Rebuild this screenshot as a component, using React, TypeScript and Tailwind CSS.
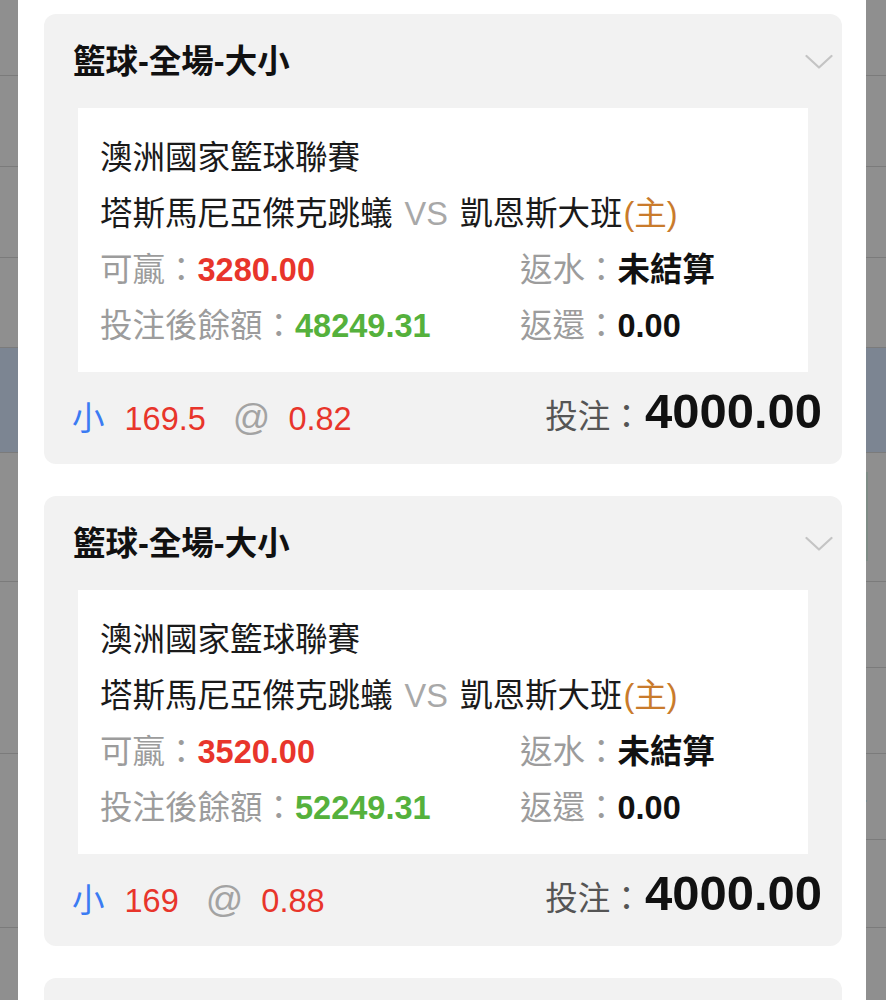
import React from "react";

type Bet = {
  win: string;
  balance: string;
  line: string;
  odds: string;
};

const bets: Bet[] = [
  { win: "3280.00", balance: "48249.31", line: "169.5", odds: "0.82" },
  { win: "3520.00", balance: "52249.31", line: "169", odds: "0.88" },
  { win: "3520.00", balance: "52249.31", line: "169", odds: "0.88" },
];

const Chevron = () => (
  <svg width="28" height="16" viewBox="0 0 28 16" fill="none">
    <polyline
      points="1.5,2 14,13.5 26.5,2"
      stroke="#c4c4c4"
      strokeWidth="2.2"
      strokeLinecap="round"
      strokeLinejoin="round"
    />
  </svg>
);

const BetCard: React.FC<{ bet: Bet }> = ({ bet }) => {
  return (
    <div className="shrink-0 rounded-[12px] bg-[#f2f2f2]">
      {/* Title */}
      <div className="mt-[26px] flex h-[44px] items-center justify-between pl-[29px] pr-[9px]">
        <span className="text-[32.5px] font-bold leading-[44px] text-[#111]">
          籃球-全場-大小
        </span>
        <Chevron />
      </div>

      {/* Detail box */}
      <div className="mx-[34px] mt-[24px] bg-white pb-[18px] pl-[22px] pt-[22px] text-[32.5px] leading-[56px]">
        <p className="text-[#1a1a1a]">澳洲國家籃球聯賽</p>
        <p className="text-[#1a1a1a]">
          塔斯馬尼亞傑克跳蟻<span className="ml-[12px] mr-[12px] text-[#a8a8a8]">VS</span>凱恩斯大班
          <span className="ml-[1px] text-[#c97b2c]">(主)</span>
        </p>
        <div className="flex">
          <p className="w-[420px] text-[#9c9c9c]">
            可贏：<span className="font-bold text-[#e8352b]">{bet.win}</span>
          </p>
          <p className="text-[#9c9c9c]">
            返水：<span className="font-bold text-[#111]">未結算</span>
          </p>
        </div>
        <div className="flex">
          <p className="w-[420px] text-[#9c9c9c]">
            投注後餘額：<span className="font-bold text-[#55b13c]">{bet.balance}</span>
          </p>
          <p className="text-[#9c9c9c]">
            返還：<span className="font-bold text-[#111]">0.00</span>
          </p>
        </div>
      </div>

      {/* Footer */}
      <div className="flex h-[92px] items-center justify-between pl-[28px] pr-[20px]">
        <div className="flex items-baseline text-[32.5px]">
          <span className="text-[#3b7bf3]">小</span>
          <span className="ml-[20px] text-[#e8352b]">{bet.line}</span>
          <span className="ml-[27px] text-[37px] text-[#a3a3a3]">@</span>
          <span className="ml-[18px] text-[#e8352b]">{bet.odds}</span>
        </div>
        <div className="flex items-baseline pb-[7px]">
          <span className="text-[32.5px] text-[#555]">投注：</span>
          <span className="ml-[2px] text-[49px] font-bold leading-none text-[#111]">
            4000.00
          </span>
        </div>
      </div>
    </div>
  );
};

const Row: React.FC<{ h: string; blue?: boolean; children?: React.ReactNode }> = ({
  h,
  blue,
  children,
}) => (
  <div
    className={`flex w-full justify-end border-b border-[#7b7b7b] ${h} ${
      blue ? "bg-[#7c8592]" : ""
    }`}
  >
    {children}
  </div>
);

const Digit: React.FC<{ d: string; last?: boolean; h: string }> = ({ d, last, h }) => (
  <div
    className={`flex w-[40px] items-center pl-[4px] text-[30px] text-[#1d1d1d] ${h} ${
      last ? "" : "border-b border-[#7b7b7b]"
    }`}
  >
    {d}
  </div>
);

export default function App() {
  return (
    <div className="relative h-[1000px] w-[886px] overflow-hidden bg-[#8f8f8f] font-['Liberation_Sans','Noto_Sans_CJK_TC',sans-serif]">
      {/* page underneath the sheet */}
      <div className="flex flex-col">
        <Row h="h-[76px]" />
        <Row h="h-[91px]" />
        <Row h="h-[91px]" />
        <Row h="h-[90px]" />
        <Row h="h-[105px]" blue />
        <Row h="h-[129px]">
          <div className="mt-[19px] h-[89px] w-[20px] border-l-2 border-[#7f8c86]" />
        </Row>
        <Row h="h-[172px]">
          <div className="flex flex-col">
            <Digit d="0" h="h-[86px]" />
            <Digit d="0" h="h-[85px]" last />
          </div>
        </Row>
        <Row h="h-[174px]">
          <div className="flex flex-col">
            <Digit d="4" h="h-[86px]" />
            <Digit d="6" h="h-[87px]" last />
          </div>
        </Row>
        <div className="flex h-[80px] justify-end">
          <Digit d="6" h="h-[80px]" last />
        </div>
      </div>

      {/* bottom sheet over the page */}
      <div className="absolute bottom-0 left-[18px] top-0 flex w-[848px] flex-col gap-[32px] overflow-hidden bg-white pl-[26px] pr-[24px] pt-[14px]">
        {bets.map((bet, i) => (
          <BetCard key={i} bet={bet} />
        ))}
      </div>
    </div>
  );
}
